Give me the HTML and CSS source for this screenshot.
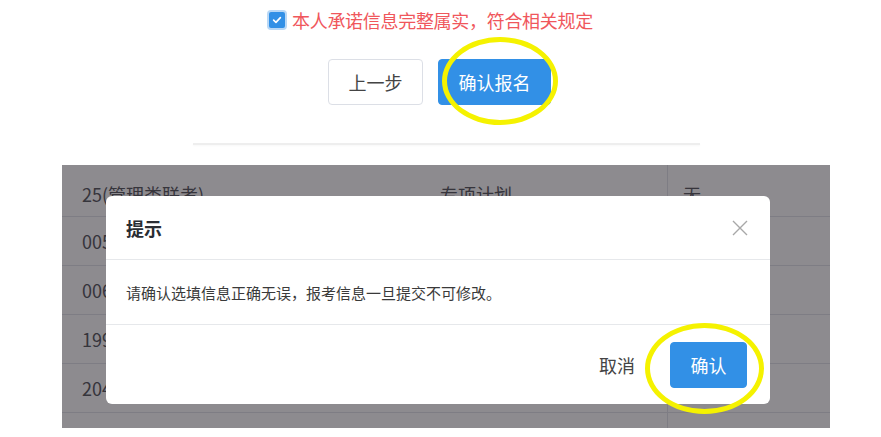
FILE: index.html
```html
<!DOCTYPE html>
<html lang="zh-CN">
<head>
<meta charset="utf-8">
<title>确认报名</title>
<link rel="stylesheet" href="styles.css">
</head>
<body>
<div class="page">
  <div class="top">
    <label class="agree">
      <span class="cb"><svg viewBox="0 0 16 16" width="12" height="12"><path d="M3.5 8.2 L6.6 11.2 L12.5 4.8" fill="none" stroke="#fff" stroke-width="2.2" stroke-linecap="round" stroke-linejoin="round"/></svg></span>
      <span class="agree-text">本人承诺信息完整属实，符合相关规定</span>
    </label>
    <div class="actions">
      <button class="btn">上一步</button>
      <button class="btn primary">确认报名</button>
    </div>
    <div class="rule"></div>
  </div>

  <div class="stage">
    <div class="table">
      <div class="row first"><div class="c1">25(管理类联考)</div><div class="c2">专项计划</div><div class="c3">无</div></div>
      <div class="row"><div class="c1">005</div><div class="c2">非定向</div><div class="c3">无</div></div>
      <div class="row"><div class="c1">006</div><div class="c2">全日制</div><div class="c3">无</div></div>
      <div class="row"><div class="c1">199</div><div class="c2">管理类联考</div><div class="c3">无</div></div>
      <div class="row"><div class="c1">204</div><div class="c2">英语二</div><div class="c3">无</div></div>
      <div class="row"><div class="c1"></div><div class="c2"></div><div class="c3"></div></div>
    </div>
    <div class="mask"></div>
    <div class="modal">
      <div class="modal-head">
        <span class="modal-title">提示</span>
        <svg class="close" viewBox="0 0 16 16" width="16" height="16"><path d="M1 1 L15 15 M15 1 L1 15" stroke="#a8a8a8" stroke-width="1.4" fill="none"/></svg>
      </div>
      <div class="modal-body">请确认选填信息正确无误，报考信息一旦提交不可修改。</div>
      <div class="modal-foot">
        <span class="cancel">取消</span>
        <button class="btn primary ok">确认</button>
      </div>
    </div>
  </div>

  <div class="ring ring1"></div>
  <div class="ring ring2"></div>
</div>
</body>
</html>
```

FILE: styles.css
```css
* { box-sizing: border-box; }
html, body { margin: 0; padding: 0; background: #fff; }
body {
  font-family: "Noto Sans CJK SC", "Noto Sans", "Liberation Sans", sans-serif;
  width: 881px;
  height: 437px;
  overflow: hidden;
}
.page { position: relative; width: 881px; height: 437px; }

.top { display: flex; flex-direction: column; padding-top: 10px; }

.agree { display: flex; align-items: center; margin-left: 267px; height: 20px; gap: 5px; }
.cb {
  width: 20px; height: 20px;
  border-radius: 4px;
  background: #3290e6;
  border: 2px solid #b9d8f6;
  display: flex; align-items: center; justify-content: center;
}
.agree-text { font-size: 18px; color: #f0575c; line-height: 20px; letter-spacing: -0.3px; }

.actions { display: flex; gap: 15px; margin-top: 29px; margin-left: 328px; }
.btn {
  font-family: inherit;
  height: 46px;
  font-size: 18px;
  border: 1px solid #dcdfe6;
  background: #fff;
  color: #444;
  border-radius: 4px;
  padding: 0;
  width: 95px;
}
.btn.primary { background: #3290e6; border-color: #3290e6; color: #fff; width: 113px; }

.rule {
  margin-top: 38px;
  margin-left: 193px;
  width: 507px;
  height: 2px;
  background: #eeeeee;
  box-shadow: 0 1px 2px rgba(0,0,0,0.03);
}

.stage {
  position: relative;
  margin-top: 20px;
  margin-left: 62px;
  width: 768px;
  height: 263px;
  overflow: hidden;
  background: #fff;
}
.table { display: flex; flex-direction: column; }
.row {
  display: grid;
  grid-template-columns: 378px 227px 1fr;
  height: 49px;
  border-bottom: 1px solid #e3e5ea;
  align-items: center;
  font-size: 18px;
  color: #5e6066;
}
.row.first { height: 52px; }
.row > div { height: 100%; display: flex; align-items: center; white-space: nowrap; }
.c1 { padding-left: 20px; }
.c3 { padding-left: 15px; border-left: 1px solid #e3e5ea; }
.row.first > div { align-items: flex-start; padding-top: 16px; }

.mask { position: absolute; inset: 0; background: rgba(6, 2, 10, 0.46); }

.modal {
  position: absolute;
  left: 44px;
  top: 31px;
  width: 664px;
  height: 208px;
  background: #fff;
  border-radius: 6px;
  display: flex;
  flex-direction: column;
}
.modal-head {
  height: 64px;
  display: flex;
  align-items: center;
  justify-content: space-between;
  padding: 0 22px 0 20px;
  border-bottom: 1px solid #e6e8eb;
}
.modal-title { font-size: 18px; font-weight: 700; color: #2a2d33; }
.modal-body {
  height: 65px;
  display: flex;
  align-items: center;
  padding-left: 20px;
  font-size: 15px;
  color: #3a3a3a;
  border-bottom: 1px solid #e6e8eb;
}
.modal-foot {
  flex: 1;
  display: flex;
  align-items: center;
  justify-content: flex-end;
  gap: 35px;
  padding-right: 23px;
}
.cancel { font-size: 18px; color: #444; }
.btn.ok { width: 77px; height: 46px; }

.ring {
  position: absolute;
  border: 5px solid #f5f200;
  border-radius: 50%;
}
.ring1 { left: 442px; top: 37px; width: 116px; height: 88px; }
.ring2 { left: 645px; top: 323px; width: 119px; height: 91px; }
```
